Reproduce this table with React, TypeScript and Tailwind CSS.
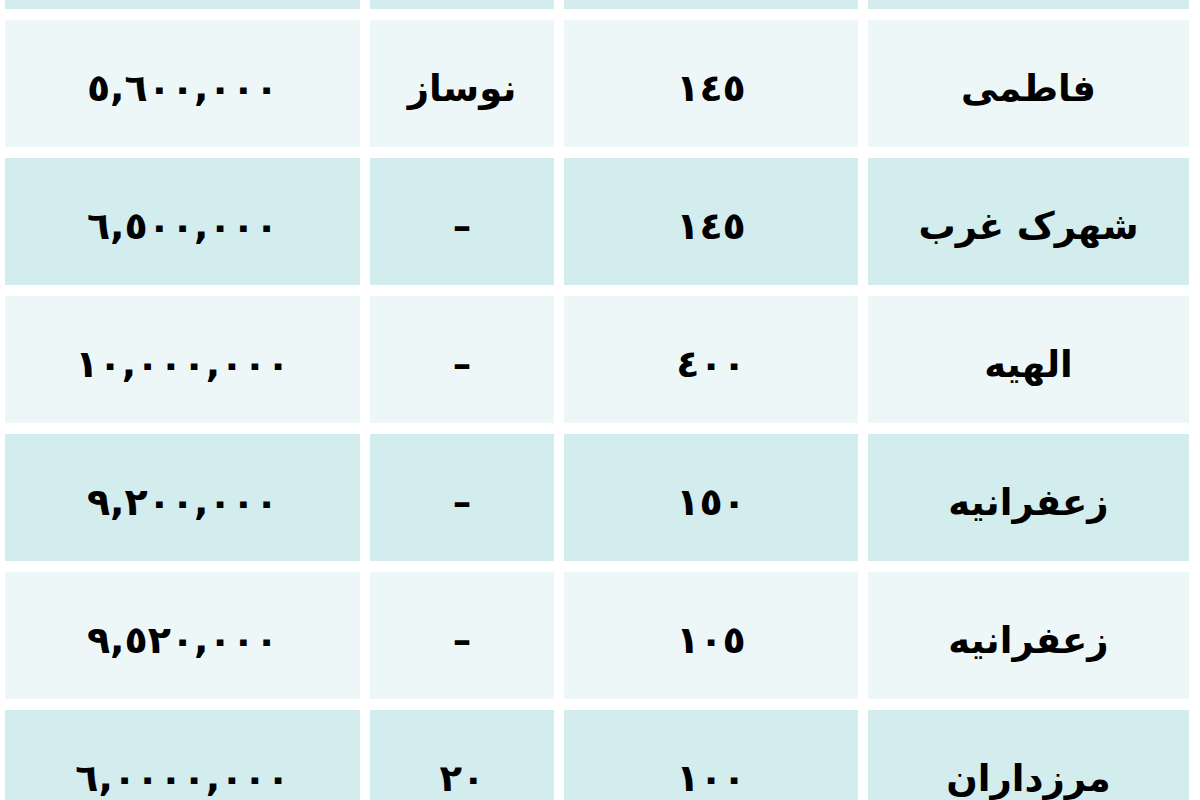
import React from 'react';

type Row = { area: string; size: string; age: string; price: string };

const rows: Row[] = [
  { area: 'فاطمی', size: '١٤٥', age: 'نوساز', price: '٥,٦٠٠,٠٠٠' },
  { area: 'شهرک غرب', size: '١٤٥', age: '–', price: '٦,٥٠٠,٠٠٠' },
  { area: 'الهیه', size: '٤٠٠', age: '–', price: '١٠,٠٠٠,٠٠٠' },
  { area: 'زعفرانیه', size: '١٥٠', age: '–', price: '٩,٢٠٠,٠٠٠' },
  { area: 'زعفرانیه', size: '١٠٥', age: '–', price: '٩,٥٢٠,٠٠٠' },
  { area: 'مرزداران', size: '١٠٠', age: '٢٠', price: '٦,٠٠٠٠,٠٠٠' },
];

function Cell({ children, tone, wide }: { children?: React.ReactNode; tone: string; wide?: boolean }) {
  return (
    <div className={`${tone} flex items-center justify-center pt-[10px] ${wide ? 'tracking-[7px] text-[38px]' : ''}`}>
      {children}
    </div>
  );
}

export default function App() {
  return (
    <div
      dir="rtl"
      className="w-[1200px] h-[800px] overflow-hidden bg-white pl-[5px] pr-[11px] text-black font-bold text-[37px]"
      style={{ fontFamily: '"DejaVu Sans", sans-serif' }}
    >
      <div className="grid grid-cols-[321px_294px_184px_355px] gap-x-[10px] gap-y-[11px] auto-rows-[127px] grid-rows-[9px]">
        {/* previous row, cut off at the top */}
        <div className="bg-[#d5ecee]" />
        <div className="bg-[#d5ecee]" />
        <div className="bg-[#d5ecee]" />
        <div className="bg-[#d5ecee]" />

        {rows.map((r, i) => {
          const tone = i % 2 === 0 ? 'bg-[#eef7f8]' : 'bg-[#d3ecee]';
          return (
            <React.Fragment key={i}>
              <Cell tone={tone}>{r.area}</Cell>
              <Cell tone={tone} wide>{r.size}</Cell>
              <Cell tone={tone}>{r.age}</Cell>
              <Cell tone={tone} wide>{r.price}</Cell>
            </React.Fragment>
          );
        })}
      </div>
    </div>
  );
}
